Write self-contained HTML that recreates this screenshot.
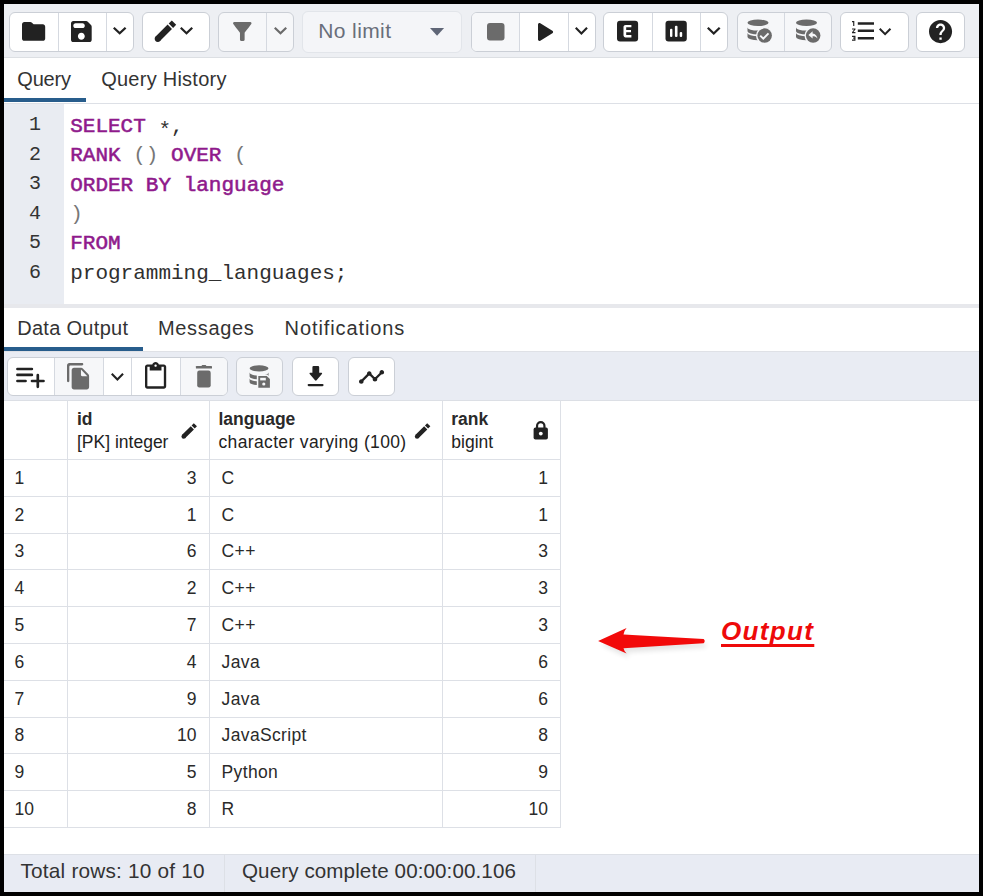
<!DOCTYPE html>
<html><head><meta charset="utf-8">
<style>
*{box-sizing:border-box;margin:0;padding:0}
html,body{width:983px;height:896px;overflow:hidden;background:#000}
body{position:relative;font-family:"Liberation Sans",sans-serif;color:#222}
.a{position:absolute}
#panel{position:absolute;left:4px;top:4px;width:975px;height:888px;background:#fff;overflow:hidden}
.grp{position:absolute;border:1px solid #cbcfd6;border-radius:6px;background:#fff;overflow:hidden}
svg{position:absolute;display:block;overflow:visible}
.tab{position:absolute;font-size:20px;color:#333;white-space:nowrap;line-height:24px}
.code{position:absolute;left:66.2px;font-family:"Liberation Mono",monospace;font-size:21px;white-space:pre;line-height:29.5px;color:#303030}
.ln{position:absolute;left:24px;width:13px;text-align:right;font-family:"Liberation Mono",monospace;font-size:20px;color:#333;line-height:29.5px}
.kw{color:#8f1a8c;-webkit-text-stroke:0.55px #8f1a8c}
.op{color:#777}
.cell{position:absolute;font-size:17.5px;color:#2a2a2a;white-space:nowrap;line-height:20px}
.hb{font-weight:bold}
.hs{color:#222}
</style></head><body>
<div id="panel">
<div class="a" style="left:0;top:0;width:975px;height:54px;background:#edeff3;border-bottom:1px solid #dcdfe3"></div>
<div class="grp" style="left:5px;top:8px;width:124.5px;height:40px;background:#fff"><div class="a" style="left:48px;top:0;width:1px;height:100%;background:#d5d9e0"></div><div class="a" style="left:96.4px;top:0;width:1px;height:100%;background:#d5d9e0"></div></div><div class="grp" style="left:137.7px;top:8px;width:68.8px;height:40px;background:#fff"></div><div class="grp" style="left:214.3px;top:8px;width:75.9px;height:40px;background:#f6f7f9"><div class="a" style="left:47.2px;top:0;width:1px;height:100%;background:#d5d9e0"></div></div><div class="grp" style="border-color:#e2e5ea;left:298.4px;top:6.5px;width:160.1px;height:42.5px;background:#f4f5f8"></div><div class="grp" style="left:467.4px;top:8px;width:124.2px;height:40px;background:#fff"><div class="a" style="left:0.0px;top:0;width:46.6px;height:100%;background:#f6f7f9"></div><div class="a" style="left:46.6px;top:0;width:1px;height:100%;background:#d5d9e0"></div><div class="a" style="left:95.2px;top:0;width:1px;height:100%;background:#d5d9e0"></div></div><div class="grp" style="left:599.4px;top:8px;width:124.2px;height:40px;background:#fff"><div class="a" style="left:47.3px;top:0;width:1px;height:100%;background:#d5d9e0"></div><div class="a" style="left:96.0px;top:0;width:1px;height:100%;background:#d5d9e0"></div></div><div class="grp" style="left:732.6px;top:8px;width:95.5px;height:40px;background:#f6f7f9"><div class="a" style="left:46.2px;top:0;width:1px;height:100%;background:#d5d9e0"></div></div><div class="grp" style="left:836.1px;top:8px;width:68.8px;height:40px;background:#fff"></div><div class="grp" style="left:912.4px;top:8px;width:48.4px;height:40px;background:#fff"></div><svg style="left:17.7px;top:17.7px;width:23.2px;height:18.8px" viewBox="2 4 20 16" preserveAspectRatio="none" fill="#222"><path d="M20 6h-8l-1.41-1.41C10.21 4.21 9.7 4 9.17 4H4c-1.1 0-1.99.9-1.99 2L2 18c0 1.1.9 2 2 2h16c1.1 0 2-.9 2-2V8c0-1.1-.9-2-2-2z"/></svg><svg style="left:67.4px;top:16.6px;width:20.7px;height:21.1px" viewBox="3 3 18 18" preserveAspectRatio="none" fill="#222"><path d="M17.59 3.59c-.38-.38-.89-.59-1.42-.59H5c-1.11 0-2 .9-2 2v14c0 1.1.9 2 2 2h14c1.1 0 2-.9 2-2V7.83c0-.53-.21-1.04-.59-1.41l-2.82-2.83zM12 19c-1.66 0-3-1.34-3-3s1.34-3 3-3 3 1.34 3 3-1.34 3-3 3zm1-10H7c-1.1 0-2-.9-2-2s.9-2 2-2h6c1.1 0 2 .9 2 2s-.9 2-2 2z"/></svg><svg style="left:109.3px;top:23.1px;width:13.4px;height:7.7px" viewBox="6 8.59 12 7.41" preserveAspectRatio="none" fill="#222"><path d="M7.41 8.59 12 13.17l4.59-4.58L18 10l-6 6-6-6z"/></svg><svg color="#222" style="left:146px;top:12px;width:30px;height:30px" viewBox="150 16 30 30" fill="#222"><g transform="translate(154.6 20.4) scale(1.0) translate(-154.6 -20.4)"><path d="M157.8 38.8L169.8 26.8M170.9 25.7L174 22.6" stroke="currentColor" stroke-width="6.2" fill="none"/><circle cx="157.8" cy="38.8" r="3.1"/></g></svg><svg style="left:175.9px;top:23.1px;width:13.0px;height:7.7px" viewBox="6 8.59 12 7.41" preserveAspectRatio="none" fill="#222"><path d="M7.41 8.59 12 13.17l4.59-4.58L18 10l-6 6-6-6z"/></svg><svg style="left:228.7px;top:17.7px;width:18.6px;height:19.0px" viewBox="4 4 16 16" preserveAspectRatio="none" fill="#6b6b6b"><path d="M4.25 5.61C6.27 8.2 10 13 10 13v6c0 .55.45 1 1 1h2c.55 0 1-.45 1-1v-6s3.72-4.8 5.74-7.39c.51-.66.04-1.61-.79-1.61H5.04c-.83 0-1.3.95-.79 1.61z"/></svg><svg style="left:269.8px;top:23.1px;width:13.0px;height:7.7px" viewBox="6 8.59 12 7.41" preserveAspectRatio="none" fill="#6b6b6b"><path d="M7.41 8.59 12 13.17l4.59-4.58L18 10l-6 6-6-6z"/></svg><div class="a" style="left:314.2px;top:14.5px;font-size:21px;color:#696e7a;white-space:nowrap;letter-spacing:0.4px">No limit</div><svg style="left:425.6px;top:24.4px;width:14.1px;height:7.7px" viewBox="7 10 10 5" preserveAspectRatio="none" fill="#5f6677"><path d="M7 10l5 5 5-5z"/></svg><svg style="left:482.5px;top:19.2px;width:17.5px;height:17.4px" viewBox="0 0 12 12" preserveAspectRatio="none" fill="#6b6b6b"><rect x="0" y="0" width="12" height="12" rx="2"/></svg><svg style="left:533.8px;top:18.8px;width:15.1px;height:18.1px" viewBox="8 5.8 10.15 12.4" preserveAspectRatio="none" fill="#222"><path d="M8 6.82v10.36c0 .79.87 1.27 1.54.84l8.14-5.18c.62-.39.62-1.29 0-1.69L9.54 5.98C8.87 5.55 8 6.03 8 6.82z"/></svg><svg style="left:571.4px;top:23.2px;width:12.8px;height:8.0px" viewBox="6 8.59 12 7.41" preserveAspectRatio="none" fill="#222"><path d="M7.41 8.59 12 13.17l4.59-4.58L18 10l-6 6-6-6z"/></svg><svg style="left:608px;top:12px;width:78px;height:30px" viewBox="612 16 78 30" fill="#222"><rect x="617" y="20.7" width="21.1" height="20.7" rx="3"/><path d="M625.6 24.9h5.8v2.4h-5.2v2.6h4.8v2.3h-4.8v2.8h5.2v2.4h-5.8c-1.2 0-2.1-.9-2.1-2.1v-8.3c0-1.2.9-2.1 2.1-2.1z" fill="#fff"/><rect x="665.5" y="20.7" width="21.3" height="20.7" rx="3"/><rect x="670" y="28.7" width="2.4" height="8.4" rx="1.1" fill="#fff"/><rect x="674.9" y="25.7" width="2.6" height="11.4" rx="1.1" fill="#fff"/><rect x="679.7" y="32" width="2.5" height="5.1" rx="1.1" fill="#fff"/></svg><svg style="left:703.4px;top:23.2px;width:13.5px;height:8.0px" viewBox="6 8.59 12 7.41" preserveAspectRatio="none" fill="#222"><path d="M7.41 8.59 12 13.17l4.59-4.58L18 10l-6 6-6-6z"/></svg><svg style="left:736px;top:11px;width:90px;height:31px" viewBox="740 15 90 31" fill="#6b6b6b"><ellipse cx="758" cy="22.8" rx="10.55" ry="3.2"/><path d="M747.5 27.4A10.55 3.2 0 0 0 768.6 27.4V31.3A10.55 3.2 0 0 1 747.5 31.3Z"/><path d="M747.5 33.1A10.55 3.2 0 0 0 768.6 33.1V37A10.55 3.2 0 0 1 747.5 37Z"/><circle cx="764.65" cy="35.6" r="8.7" fill="#f6f7f9"/><circle cx="764.65" cy="35.6" r="7.25"/><path d="M760.2 35.6l3.1 3.1 5.2-5.3" stroke="#f6f7f9" stroke-width="2" fill="none"/><ellipse cx="806.5" cy="22.8" rx="10.55" ry="3.2"/><path d="M796.0 27.4A10.55 3.2 0 0 0 817.1 27.4V31.3A10.55 3.2 0 0 1 796.0 31.3Z"/><path d="M796.0 33.1A10.55 3.2 0 0 0 817.1 33.1V37A10.55 3.2 0 0 1 796.0 37Z"/><circle cx="813.15" cy="35.6" r="8.7" fill="#f6f7f9"/><circle cx="813.15" cy="35.6" r="7.25"/><path d="M812.6 31.3l-4.2 3.6 4.2 3.6v-2.2c2.2 0 3.6.5 4.9 2.2-.5-2.6-1.9-4.6-4.9-5z" fill="#f6f7f9"/></svg><svg style="left:848.4px;top:17.1px;width:22.0px;height:19.7px" viewBox="2 4 19 16" preserveAspectRatio="none" fill="#222"><path d="M2 17h2v.5H3v1h1v.5H2v1h3v-4H2v1zm1-9h1V4H2v1h1v3zm-1 3h1.8L2 13.1v.9h3v-1H3.2L5 10.9V10H2v1zm5-6v2h14V5H7zm0 14h14v-2H7v2zm0-6h14v-2H7v2z"/></svg><svg style="left:875px;top:23.7px;width:12.2px;height:7.5px" viewBox="6 8.59 12 7.41" preserveAspectRatio="none" fill="#222"><path d="M7.41 8.59 12 13.17l4.59-4.58L18 10l-6 6-6-6z"/></svg><svg style="left:925.4px;top:15.5px;width:23.1px;height:23.2px" viewBox="2 2 20 20" preserveAspectRatio="none" fill="#222"><path d="M12 2C6.48 2 2 6.48 2 12s4.48 10 10 10 10-4.48 10-10S17.52 2 12 2zm1 17h-2v-2h2v2zm2.07-7.75l-.9.92C13.45 12.9 13 13.5 13 15h-2v-.5c0-1.1.45-2.1 1.17-2.83l1.24-1.26c.37-.36.59-.86.59-1.41 0-1.1-.9-2-2-2s-2 .9-2 2H8c0-2.21 1.79-4 4-4s4 1.79 4 4c0 .88-.36 1.68-.93 2.25z"/></svg>
<div class="a" style="left:0;top:99px;width:975px;height:1px;background:#dde0e6"></div>
<div class="tab" style="left:13.3px;top:63px;letter-spacing:-0.2px">Query</div>
<div class="tab" style="left:97.2px;top:63px;letter-spacing:0.25px">Query History</div>
<div class="a" style="left:0;top:94.2px;width:82.2px;height:4.2px;background:#285d8c"></div>
<div class="a" style="left:0;top:99.5px;width:60px;height:200.2px;background:#e9ecf2"></div>
<div class="ln" style="top:106.3px">1</div><div class="code" style="top:107.6px"><span class="kw">SELECT</span> <span class="op" style="position:relative;top:4px;color:#333">*</span>,</div><div class="ln" style="top:135.76px">2</div><div class="code" style="top:137.06px"><span class="kw">RANK</span> <span class="op">()</span> <span class="kw">OVER</span> <span class="op">(</span></div><div class="ln" style="top:165.22px">3</div><div class="code" style="top:166.52px"><span class="kw">ORDER</span> <span class="kw">BY</span> <span class="kw">language</span></div><div class="ln" style="top:194.68px">4</div><div class="code" style="top:195.98px"><span class="op">)</span></div><div class="ln" style="top:224.14px">5</div><div class="code" style="top:225.44px"><span class="kw">FROM</span></div><div class="ln" style="top:253.6px">6</div><div class="code" style="top:254.9px">programming_languages;</div>
<div class="a" style="left:0;top:300px;width:975px;height:4px;background:#e7e8ec"></div>
<div class="tab" style="left:13.2px;top:312px;letter-spacing:0.3px">Data Output</div>
<div class="tab" style="left:154px;top:312px;letter-spacing:0.67px">Messages</div>
<div class="tab" style="left:280.6px;top:312px;letter-spacing:0.9px">Notifications</div>
<div class="a" style="left:0;top:343.1px;width:139.4px;height:4.1px;background:#285d8c"></div>
<div class="a" style="left:0;top:347.2px;width:975px;height:50.0px;background:#e9ecf3;border-top:1px solid #dfe1e6;border-bottom:1px solid #dcdfe5"></div>
<div class="grp" style="left:2.6px;top:352.8px;width:221.0px;height:39.6px;background:#fff"><div class="a" style="left:47.2px;top:0;width:48.1px;height:100%;background:#f6f7f9"></div><div class="a" style="left:172.6px;top:0;width:46.4px;height:100%;background:#f6f7f9"></div><div class="a" style="left:46.7px;top:0;width:1px;height:100%;background:#d5d9e0"></div><div class="a" style="left:95.3px;top:0;width:1px;height:100%;background:#d5d9e0"></div><div class="a" style="left:123.6px;top:0;width:1px;height:100%;background:#d5d9e0"></div><div class="a" style="left:172.1px;top:0;width:1px;height:100%;background:#d5d9e0"></div></div><div class="grp" style="left:232px;top:352.8px;width:46.8px;height:39.6px;background:#f6f7f9"></div><div class="grp" style="left:288px;top:352.8px;width:47.3px;height:39.6px;background:#fff"></div><div class="grp" style="left:343.6px;top:352.8px;width:47.6px;height:39.6px;background:#fff"></div><svg style="left:8px;top:358px;width:38px;height:30px" viewBox="12 362 38 30" fill="#222"><path d="M17.45 369H31.85M17.45 374.9H31.85M17.45 381H25.55M32 381H43.5M37.8 375.2V386.8" stroke="#222" stroke-width="2.7" stroke-linecap="round" fill="none"/></svg><svg style="left:63.2px;top:359.2px;width:22.1px;height:26.5px" viewBox="2 1 19 22" preserveAspectRatio="none" fill="#6b6b6b"><path d="M15 1H4c-1.1 0-2 .9-2 2v13c0 .55.45 1 1 1s1-.45 1-1V4c0-.55.45-1 1-1h10c.55 0 1-.45 1-1s-.45-1-1-1zm.59 4.59 4.83 4.83c.37.37.58.88.58 1.41V21c0 1.1-.9 2-2 2H7.99C6.89 23 6 22.1 6 21l.01-14c0-1.1.89-2 1.99-2h6.17c.53 0 1.04.21 1.42.59zM15 12h4.5L14 6.5V11c0 .55.45 1 1 1z"/></svg><svg style="left:106.9px;top:369.2px;width:12.8px;height:7.9px" viewBox="6 8.59 12 7.41" preserveAspectRatio="none" fill="#222"><path d="M7.41 8.59 12 13.17l4.59-4.58L18 10l-6 6-6-6z"/></svg><svg style="left:140.8px;top:358.1px;width:21.2px;height:26.8px" viewBox="3 0 18 22" preserveAspectRatio="none" fill="#222"><path d="M19 2h-4.18C14.4.84 13.3 0 12 0c-1.3 0-2.4.84-2.82 2H5c-1.1 0-2 .9-2 2v16c0 1.1.9 2 2 2h14c1.1 0 2-.9 2-2V4c0-1.1-.9-2-2-2zm-7 0c.55 0 1 .45 1 1s-.45 1-1 1-1-.45-1-1 .45-1 1-1zm7 18H5V4h2v3h10V4h2v16z"/></svg><svg style="left:186px;top:358px;width:28px;height:30px" viewBox="190 362 28 30" fill="#6b6b6b"><rect x="195.9" y="366" width="16.1" height="2.5" rx="0.6"/><rect x="201.8" y="365" width="4.3" height="2" rx="0.6"/><rect x="197.2" y="370.6" width="13.5" height="16.9" rx="2.2"/></svg><svg style="left:241px;top:358px;width:28px;height:28px" viewBox="245 362 28 28" fill="#6b6b6b"><ellipse cx="259.05" cy="368.35" rx="9.45" ry="3.05"/><path d="M249.6 372.6A9.45 3.05 0 0 0 268.5 372.6V376.4A9.45 3.05 0 0 1 249.6 376.4Z"/><path d="M249.6 378.4A9.45 3.05 0 0 0 268.5 378.4V382.2A9.45 3.05 0 0 1 249.6 382.2Z"/><path d="M256.8 374.4h10.5l4.1 4.1v10.7h-14.6z" fill="#f6f7f9"/><path d="M258.3 375.9h8.4l3.2 3.2v8.6h-11.6z"/><rect x="260.2" y="377.8" width="5.6" height="2.6" fill="#f6f7f9"/><circle cx="263.8" cy="384" r="1.6" fill="#f6f7f9"/></svg><svg style="left:300px;top:358px;width:24px;height:28px" viewBox="304 362 24 28" fill="#222"><path d="M312.4 367.2Q312.4 366 313.6 366H318Q319.2 366 319.2 367.2V372.8H321.4Q322.7 372.9 321.9 373.9L316.6 380.2Q315.8 381.1 315 380.2L309.7 373.9Q308.9 372.9 310.2 372.8H312.4Z"/><path d="M308.7 385.1H322.5" stroke="#222" stroke-width="2.2" stroke-linecap="round"/></svg><svg style="left:354.9px;top:366px;width:25.1px;height:13.8px" viewBox="1 6 22 12" preserveAspectRatio="none" fill="#222"><path d="M23 8c0 1.1-.9 2-2 2-.18 0-.35-.02-.51-.07l-3.56 3.55c.05.16.07.34.07.52 0 1.1-.9 2-2 2s-2-.9-2-2c0-.18.02-.36.07-.52l-2.55-2.55c-.16.05-.34.07-.52.07s-.36-.02-.52-.07l-4.55 4.56c.05.16.07.33.07.51 0 1.1-.9 2-2 2s-2-.9-2-2 .9-2 2-2c.18 0 .35.02.51.07l4.56-4.55C8.02 9.36 8 9.18 8 9c0-1.1.9-2 2-2s2 .9 2 2c0 .18-.02.36-.07.52l2.55 2.55c.16-.05.34-.07.52-.07s.36.02.52.07l3.55-3.56C19.02 8.35 19 8.18 19 8c0-1.1.9-2 2-2s2 .9 2 2z"/></svg>
<div class="a" style="left:63.2px;top:396px;width:1px;height:428.0px;background:#dde0e6"></div><div class="a" style="left:204.8px;top:396px;width:1px;height:428.0px;background:#dde0e6"></div><div class="a" style="left:438.3px;top:396px;width:1px;height:428.0px;background:#dde0e6"></div><div class="a" style="left:555.7px;top:396px;width:1px;height:428.0px;background:#dde0e6"></div><div class="a" style="left:0;top:455.0px;width:556.7px;height:1px;background:#dde0e6"></div><div class="a" style="left:0;top:491.8px;width:556.7px;height:1px;background:#dde0e6"></div><div class="a" style="left:0;top:528.6px;width:556.7px;height:1px;background:#dde0e6"></div><div class="a" style="left:0;top:565.4px;width:556.7px;height:1px;background:#dde0e6"></div><div class="a" style="left:0;top:602.2px;width:556.7px;height:1px;background:#dde0e6"></div><div class="a" style="left:0;top:639.0px;width:556.7px;height:1px;background:#dde0e6"></div><div class="a" style="left:0;top:675.8px;width:556.7px;height:1px;background:#dde0e6"></div><div class="a" style="left:0;top:712.6px;width:556.7px;height:1px;background:#dde0e6"></div><div class="a" style="left:0;top:749.4px;width:556.7px;height:1px;background:#dde0e6"></div><div class="a" style="left:0;top:786.2px;width:556.7px;height:1px;background:#dde0e6"></div><div class="a" style="left:0;top:823.0px;width:556.7px;height:1px;background:#dde0e6"></div><div class="cell" style="left:10.5px;top:463.7px">1</div><div class="cell" style="right:782.5px;top:463.7px">3</div><div class="cell" style="left:217.6px;top:463.7px;letter-spacing:0.35px">C</div><div class="cell" style="right:431px;top:463.7px">1</div><div class="cell" style="left:10.5px;top:500.5px">2</div><div class="cell" style="right:782.5px;top:500.5px">1</div><div class="cell" style="left:217.6px;top:500.5px;letter-spacing:0.35px">C</div><div class="cell" style="right:431px;top:500.5px">1</div><div class="cell" style="left:10.5px;top:537.3000000000001px">3</div><div class="cell" style="right:782.5px;top:537.3000000000001px">6</div><div class="cell" style="left:217.6px;top:537.3000000000001px;letter-spacing:0.35px">C++</div><div class="cell" style="right:431px;top:537.3000000000001px">3</div><div class="cell" style="left:10.5px;top:574.1px">4</div><div class="cell" style="right:782.5px;top:574.1px">2</div><div class="cell" style="left:217.6px;top:574.1px;letter-spacing:0.35px">C++</div><div class="cell" style="right:431px;top:574.1px">3</div><div class="cell" style="left:10.5px;top:610.9000000000001px">5</div><div class="cell" style="right:782.5px;top:610.9000000000001px">7</div><div class="cell" style="left:217.6px;top:610.9000000000001px;letter-spacing:0.35px">C++</div><div class="cell" style="right:431px;top:610.9000000000001px">3</div><div class="cell" style="left:10.5px;top:647.7px">6</div><div class="cell" style="right:782.5px;top:647.7px">4</div><div class="cell" style="left:217.6px;top:647.7px;letter-spacing:0.35px">Java</div><div class="cell" style="right:431px;top:647.7px">6</div><div class="cell" style="left:10.5px;top:684.5px">7</div><div class="cell" style="right:782.5px;top:684.5px">9</div><div class="cell" style="left:217.6px;top:684.5px;letter-spacing:0.35px">Java</div><div class="cell" style="right:431px;top:684.5px">6</div><div class="cell" style="left:10.5px;top:721.3000000000001px">8</div><div class="cell" style="right:782.5px;top:721.3000000000001px">10</div><div class="cell" style="left:217.6px;top:721.3000000000001px;letter-spacing:0.35px">JavaScript</div><div class="cell" style="right:431px;top:721.3000000000001px">8</div><div class="cell" style="left:10.5px;top:758.1px">9</div><div class="cell" style="right:782.5px;top:758.1px">5</div><div class="cell" style="left:217.6px;top:758.1px;letter-spacing:0.35px">Python</div><div class="cell" style="right:431px;top:758.1px">9</div><div class="cell" style="left:10.5px;top:794.9000000000001px">10</div><div class="cell" style="right:782.5px;top:794.9000000000001px">8</div><div class="cell" style="left:217.6px;top:794.9000000000001px;letter-spacing:0.35px">R</div><div class="cell" style="right:431px;top:794.9000000000001px">10</div><div class="cell hb" style="left:73px;top:405px">id</div><div class="cell hs" style="left:73px;top:428px">[PK] integer</div><div class="cell hb" style="left:214.5px;top:405px">language</div><div class="cell hs" style="left:214.5px;top:428px;letter-spacing:0.35px">character varying (100)</div><div class="cell hb" style="left:447.3px;top:405px">rank</div><div class="cell hs" style="left:447.3px;top:428px">bigint</div><svg color="#222" style="left:172px;top:414px;width:26px;height:26px" viewBox="176 418 26 26" fill="#222"><g transform="translate(181.4 423.2) scale(0.72) translate(-154.6 -20.4)"><path d="M157.8 38.8L169.8 26.8M170.9 25.7L174 22.6" stroke="currentColor" stroke-width="6.2" fill="none"/><circle cx="157.8" cy="38.8" r="3.1"/></g></svg><svg color="#222" style="left:405px;top:414px;width:26px;height:26px" viewBox="409 418 26 26" fill="#222"><g transform="translate(414.8 423.2) scale(0.72) translate(-154.6 -20.4)"><path d="M157.8 38.8L169.8 26.8M170.9 25.7L174 22.6" stroke="currentColor" stroke-width="6.2" fill="none"/><circle cx="157.8" cy="38.8" r="3.1"/></g></svg><svg style="left:524px;top:412px;width:25px;height:28px" viewBox="528 416 25 28" fill="#222"><rect x="533.6" y="427.6" width="14.3" height="11.9" rx="1.8"/><path d="M537.05 428V425.9A3.7 3.7 0 0 1 544.45 425.9V428" stroke="#222" stroke-width="2.2" fill="none"/><circle cx="540.8" cy="433.6" r="1.9" fill="#fff"/></svg>
<div class="a" style="left:0;top:850px;width:975px;height:38px;background:#e8ebf3;border-top:1px solid #dde0e6"></div>
<div class="a" style="left:219.5px;top:850px;width:1px;height:38px;background:#dde0e6"></div>
<div class="a" style="left:531px;top:850px;width:1px;height:38px;background:#dde0e6"></div>
<div class="tab" style="left:16.5px;top:855px;font-size:20.8px;letter-spacing:0.2px">Total rows: 10 of 10</div>
<div class="tab" style="left:238px;top:855px;font-size:20.6px;letter-spacing:0.1px">Query complete 00:00:00.106</div>
<svg style="left:586px;top:616px;width:130px;height:45px" viewBox="590 620 130 45">
<defs><filter id="sh" x="-20%" y="-50%" width="140%" height="200%"><feGaussianBlur stdDeviation="2.5"/></filter></defs>
<path d="M601 645 L629 633 L626.5 639 L706 643.5 L706 647.5 L626.5 652.5 L629 658 Z" fill="#000" opacity="0.10" filter="url(#sh)"/>
<path d="M598.1 640.9 L626.6 628.1 Q624 631 623.5 634.6 L703.6 639 Q705.8 641.1 703.6 643.2 L623.5 648.3 Q624 651 626.6 653.5 Z" fill="#f20a0a"/>
</svg>
<div class="a" style="left:717px;top:612px;font-size:26px;font-weight:bold;font-style:italic;color:#ee0a0a;letter-spacing:1.35px;text-decoration-skip-ink:none;white-space:nowrap;line-height:30px;text-decoration:underline;text-decoration-thickness:3px;text-underline-offset:4px">Output</div>
</div>
</body></html>
